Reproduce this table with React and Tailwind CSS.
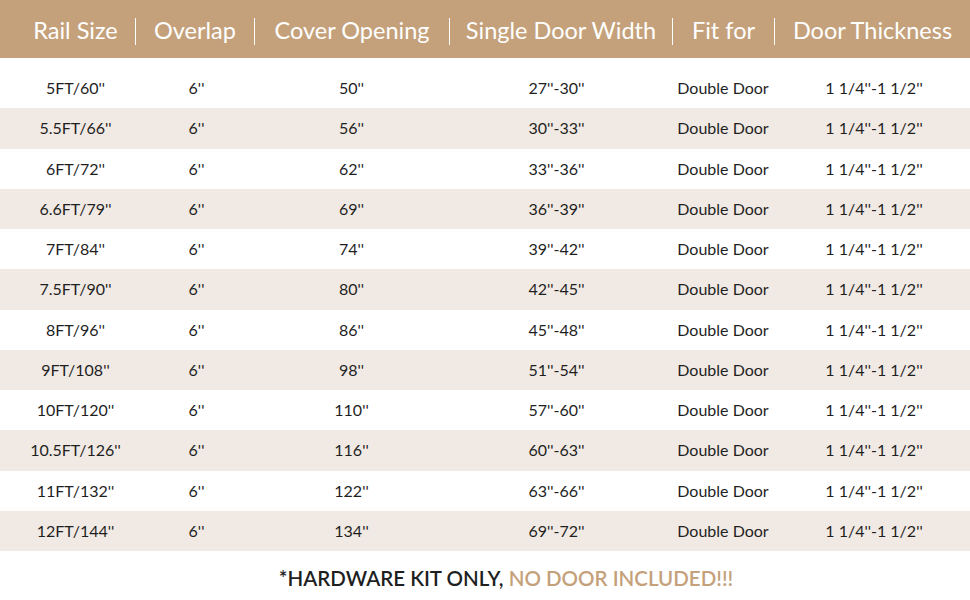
const headers = ["Rail Size", "Overlap", "Cover Opening", "Single Door Width", "Fit for", "Door Thickness"];

const rows = [
  ["5FT/60''", "6''", "50''", "27''-30''"],
  ["5.5FT/66''", "6''", "56''", "30''-33''"],
  ["6FT/72''", "6''", "62''", "33''-36''"],
  ["6.6FT/79''", "6''", "69''", "36''-39''"],
  ["7FT/84''", "6''", "74''", "39''-42''"],
  ["7.5FT/90''", "6''", "80''", "42''-45''"],
  ["8FT/96''", "6''", "86''", "45''-48''"],
  ["9FT/108''", "6''", "98''", "51''-54''"],
  ["10FT/120''", "6''", "110''", "57''-60''"],
  ["10.5FT/126''", "6''", "116''", "60''-63''"],
  ["11FT/132''", "6''", "122''", "63''-66''"],
  ["12FT/144''", "6''", "134''", "69''-72''"],
];

const cols = "grid grid-cols-[135px_119px_195px_223px_102px_196px]";

export default function App() {
  return (
    <div className="w-[970px] h-[600px] bg-white font-['Lato',sans-serif] overflow-hidden">
      <div className={`${cols} h-[58px] bg-[#c4a17b] items-center pt-[4px]`}>
        {headers.map((h, i) => (
          <div
            key={h}
            className={`flex items-center justify-center h-[27px] text-white text-[23.5px] ${i > 0 ? "border-l border-white" : "pl-4"}`}
          >
            {h}
          </div>
        ))}
      </div>

      <div className="pt-[10px]">
        {rows.map((r, i) => (
          <div
            key={r[0]}
            className={`${cols} h-[40.25px] items-center text-[16px] text-[#1f1f1f] ${i % 2 === 1 ? "bg-[#f1eae4]" : ""}`}
          >
            <div className="text-center pl-4">{r[0]}</div>
            <div className="text-center pl-1">{r[1]}</div>
            <div className="text-center">{r[2]}</div>
            <div className="text-center pr-2">{r[3]}</div>
            <div className="text-center">Double Door</div>
            <div className="text-center pl-1">1 1/4''-1 1/2''</div>
          </div>
        ))}
      </div>

      <div className="flex justify-center pt-[12px] pl-[42px] text-[20.5px] font-semibold">
        <span className="text-[#1f1f1f]">*HARDWARE KIT ONLY,&nbsp;</span>
        <span className="text-[#c4a17b]">NO DOOR INCLUDED!!!</span>
      </div>
    </div>
  );
}
